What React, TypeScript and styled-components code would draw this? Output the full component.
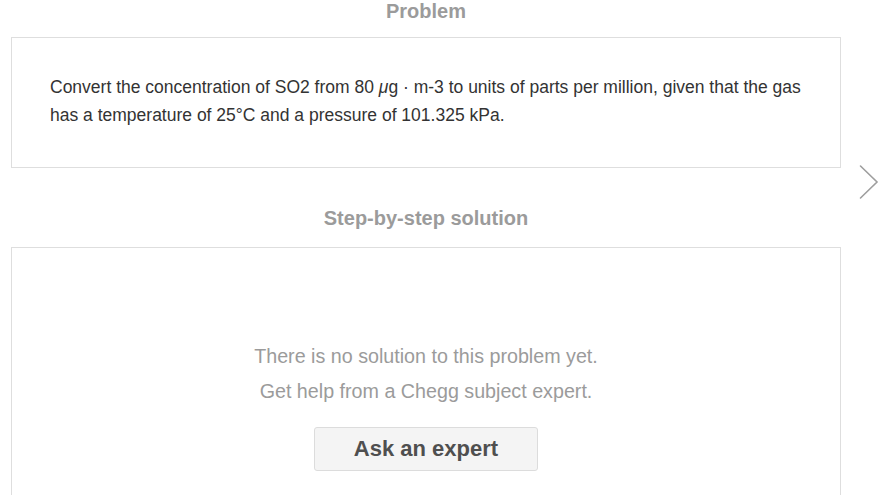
import React from 'react'
import styled, {createGlobalStyle} from 'styled-components'

const GlobalStyle = createGlobalStyle`
  html, body {
    margin: 0;
    padding: 0;
    background: #fff;
  }
  body {
    font-family: 'Liberation Sans', Helvetica, Arial, sans-serif;
    -webkit-font-smoothing: antialiased;
  }
`

const Page = styled.div`
  position: relative;
  width: 895px;
  height: 495px;
  overflow: hidden;
  padding: 1px 0 0 11px;
  box-sizing: border-box;
`

const Column = styled.div`
  width: 830px;
  display: flex;
  flex-direction: column;
`

const Heading = styled.h2<{$top?: number; $bottom: number}>`
  margin: ${(p) => p.$top ?? 0}px 0 ${(p) => p.$bottom}px;
  font-size: 20px;
  line-height: 20px;
  font-weight: 700;
  color: #9b9b9b;
  text-align: center;
`

const Card = styled.div`
  border: 1px solid #dedede;
  box-sizing: border-box;
`

const ProblemCard = styled(Card)`
  padding: 35px 34px 38px 38px;
`

const ProblemText = styled.p`
  margin: 0;
  font-size: 17.5px;
  line-height: 28px;
  color: #333;
`

const SolutionCard = styled(Card)`
  height: 320px;
  padding-top: 91px;
  display: flex;
  flex-direction: column;
  align-items: center;
`

const EmptyLine = styled.div`
  font-size: 19.7px;
  line-height: 35px;
  color: #9b9b9b;
  text-align: center;
`

const AskButton = styled.button`
  margin-top: 18px;
  width: 224px;
  height: 44px;
  box-sizing: border-box;
  border: 1px solid #dcdcdc;
  border-radius: 3px;
  background: #f4f4f4;
  font-family: 'Liberation Sans', Helvetica, Arial, sans-serif;
  font-size: 22px;
  font-weight: 700;
  color: #4f4f4f;
  cursor: pointer;
  padding: 0;
`

const NextArrow = styled.button`
  position: absolute;
  left: 859px;
  top: 164px;
  width: 20px;
  height: 36px;
  padding: 0;
  border: 0;
  background: transparent;
  cursor: pointer;
`

export default function App() {
  return (
    <>
      <GlobalStyle />
      <Page>
        <Column>
          <Heading $bottom={16}>Problem</Heading>
          <ProblemCard>
            <ProblemText>
              Convert the concentration of SO2 from 80 <i>μ</i>g · m-3 to units of parts per million,
              given that the gas has a temperature of 25°C and a pressure of 101.325 kPa.
            </ProblemText>
          </ProblemCard>
          <Heading $top={40} $bottom={19}>
            Step-by-step solution
          </Heading>
          <SolutionCard>
            <EmptyLine>There is no solution to this problem yet.</EmptyLine>
            <EmptyLine>Get help from a Chegg subject expert.</EmptyLine>
            <AskButton>Ask an expert</AskButton>
          </SolutionCard>
        </Column>
        <NextArrow aria-label='Next'>
          <svg width='20' height='36' viewBox='0 0 20 36'>
            <polyline
              points='1.5,2 18,18 1.5,34'
              fill='none'
              stroke='#9e9e9e'
              strokeWidth='1.6'
              strokeLinecap='round'
            />
          </svg>
        </NextArrow>
      </Page>
    </>
  )
}
